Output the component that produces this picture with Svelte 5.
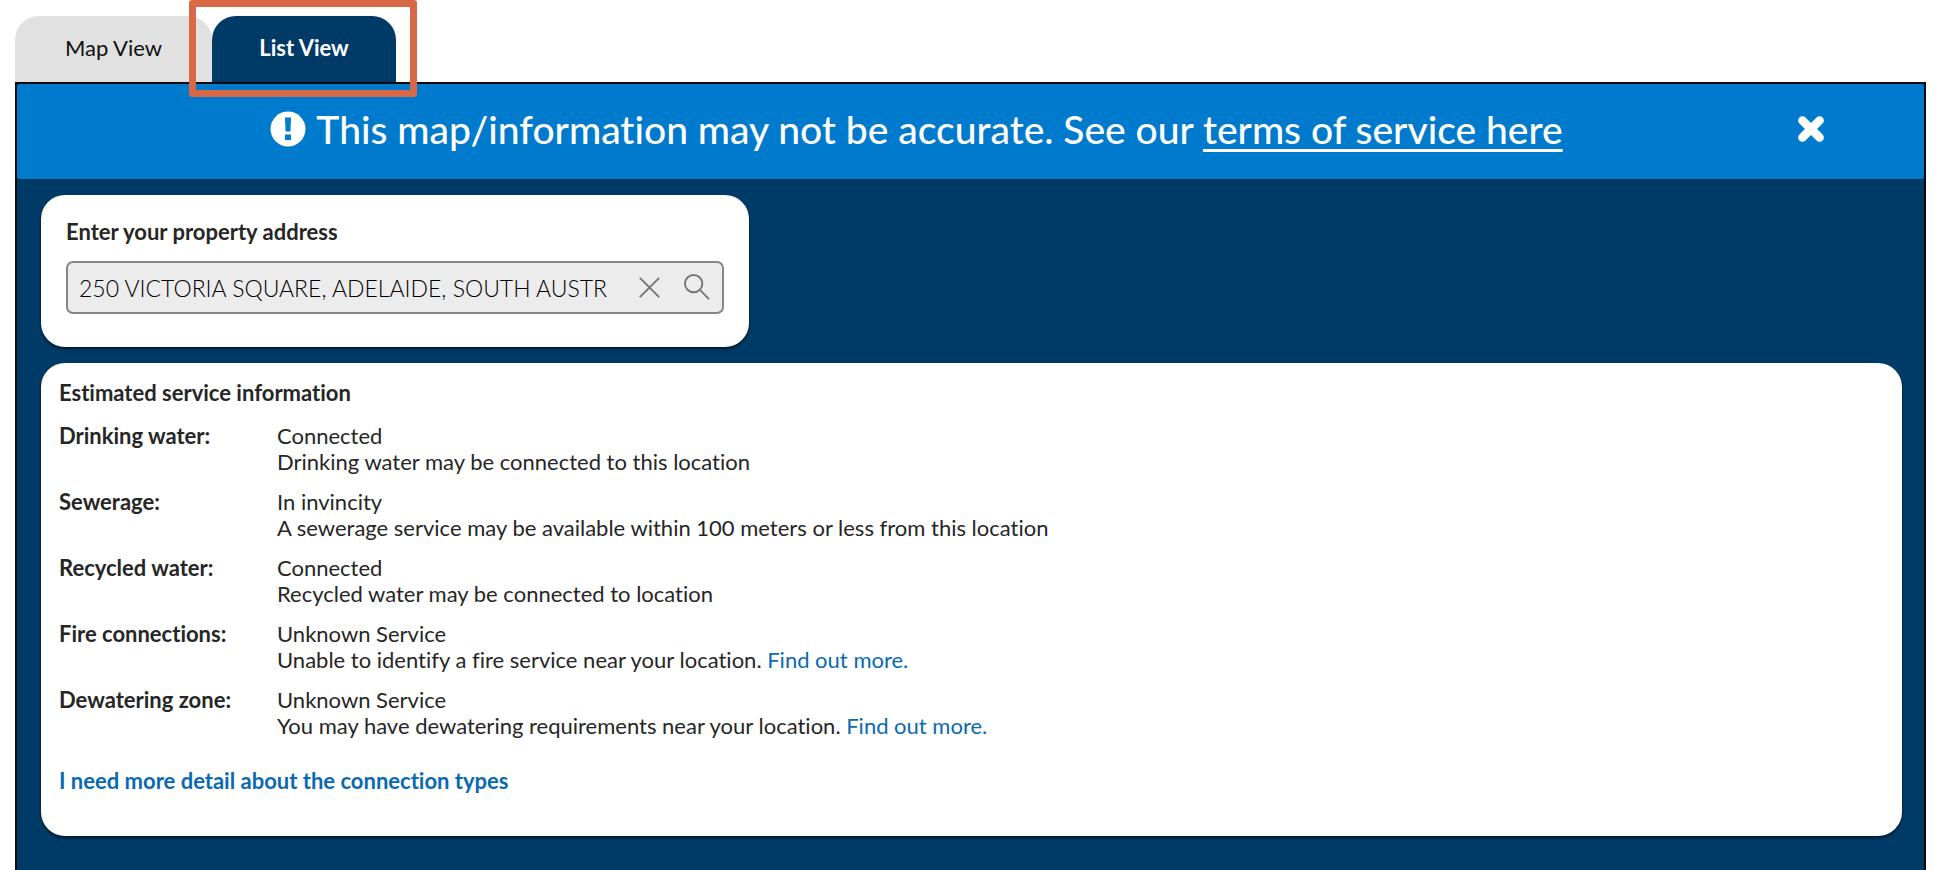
<script lang="ts">
	interface Service {
		name: string;
		status: string;
		detail: string;
		link?: boolean;
	}

	const services: Service[] = [
		{
			name: 'Drinking water:',
			status: 'Connected',
			detail: 'Drinking water may be connected to this location'
		},
		{
			name: 'Sewerage:',
			status: 'In invincity',
			detail: 'A sewerage service may be available within 100 meters or less from this location'
		},
		{
			name: 'Recycled water:',
			status: 'Connected',
			detail: 'Recycled water may be connected to location'
		},
		{
			name: 'Fire connections:',
			status: 'Unknown Service',
			detail: 'Unable to identify a fire service near your location.',
			link: true
		},
		{
			name: 'Dewatering zone:',
			status: 'Unknown Service',
			detail: 'You may have dewatering requirements near your location.',
			link: true
		}
	];

	let view = $state('list');
	let showNotice = $state(true);
	let address = $state('250 VICTORIA SQUARE, ADELAIDE, SOUTH AUSTR');
</script>

<main>
	<div class="tabs" role="tablist">
		<button role="tab" aria-selected={view === 'map'} onclick={() => (view = 'map')}>Map View</button>
		<button class="marked" role="tab" aria-selected={view === 'list'} onclick={() => (view = 'list')}>List View</button>
	</div>

	<div class="panel">
		{#if showNotice}
			<div class="notice">
				<p>
					<svg class="alert" viewBox="0 0 36 36" aria-hidden="true">
						<circle cx="18" cy="18" r="17.5" fill="#fff" />
						<path d="M15 6.500h6l-.5 14h-5zM15 23.500h6v5.500h-6z" fill="#007acc" />
					</svg>
					<span>This map/information may not be accurate. See our <a href="#terms">terms of service here</a></span>
				</p>
				<button aria-label="Close" onclick={() => (showNotice = false)}>
					<svg viewBox="0 0 28 28" aria-hidden="true">
						<path d="M6 6l16 16M22 6L6 22" stroke="#fff" stroke-width="8" stroke-linecap="round" />
					</svg>
				</button>
			</div>
		{/if}

		<div class="content">
			<form class="card search" onsubmit={(event) => event.preventDefault()}>
				<label for="address">Enter your property address</label>
				<div class="field">
					<input id="address" type="text" bind:value={address} />
					<button type="button" aria-label="Clear" onclick={() => (address = '')}>
						<svg viewBox="0 0 28 28" aria-hidden="true">
							<path d="M4 4l20 20M24 4L4 24" />
						</svg>
					</button>
					<button aria-label="Search">
						<svg viewBox="0 0 28 28" aria-hidden="true">
							<circle cx="10" cy="10" r="9" />
							<path d="M16.500 16.500L26 26" />
						</svg>
					</button>
				</div>
			</form>

			<section class="card info">
				<h2>Estimated service information</h2>
				<dl>
					{#each services as service (service.name)}
						<dt>{service.name}</dt>
						<dd>
							{service.status}<br />
							{service.detail}
							{#if service.link}<a href="#more">Find out more.</a>{/if}
						</dd>
					{/each}
				</dl>
				<a class="types" href="#types">I need more detail about the connection types</a>
			</section>
		</div>
	</div>
</main>

<style>
	:global(body) {
		margin: 0;
		background: #fff;
	}

	main {
		display: flex;
		flex-direction: column;
		box-sizing: border-box;
		min-height: 100vh;
		padding: 16px 28px 0 15px;
		font-family: Lato, 'Liberation Sans', sans-serif;
		font-size: 22px;
		font-variant-ligatures: none;
		line-height: 26px;
		color: #262626;
	}

	button {
		padding: 0;
		border: 0;
		background: none;
		font: inherit;
		cursor: pointer;
	}

	svg {
		display: block;
		fill: none;
	}

	.tabs {
		display: flex;
	}

	.tabs button {
		position: relative;
		width: 197px;
		height: 66px;
		padding-bottom: 2px;
		border-radius: 24px 24px 0 0;
		background: #e1e1e1;
		color: #111;
	}

	.tabs button.marked {
		width: 184px;
	}

	.tabs button[aria-selected='true'] {
		background: #003b67;
		color: #fff;
		font-weight: bold;
	}

	.marked::after {
		content: '';
		position: absolute;
		inset: -16px -21px -15px -23px;
		border: 7px solid #d96846;
		border-radius: 3px;
	}

	.panel {
		flex: 1;
		border: 2px solid #0a0a0f;
		border-bottom: 0;
		background: #003b67;
	}

	.notice {
		display: flex;
		align-items: center;
		box-sizing: border-box;
		height: 96px;
		padding: 0 98px 5px 20px;
		border-bottom: 1px solid #002f55;
		border-radius: 3px;
		background: #007acc;
		color: #fff;
		font-size: 39px;
		line-height: 44px;
	}

	.notice p {
		display: flex;
		flex: 1;
		align-items: center;
		justify-content: center;
		gap: 10px;
		margin: 0;
		font-weight: 500;
	}

	.notice a {
		color: inherit;
		text-decoration-thickness: 3px;
		text-underline-offset: 5px;
	}

	.alert {
		width: 36px;
		height: 36px;
	}

	.notice button svg {
		width: 30px;
		height: 30px;
	}

	.content {
		display: flex;
		flex-direction: column;
		gap: 16px;
		padding: 15px 22px 35px 24px;
	}

	.card {
		box-sizing: border-box;
		border-radius: 24px;
		background: #fff;
		box-shadow: 0 2px 3px rgba(0, 0, 0, 0.6);
	}

	.search {
		width: 708px;
		max-width: 100%;
		padding: 24px 25px 33px;
	}

	.search label {
		display: block;
		margin-bottom: 16px;
		font-weight: bold;
	}

	.field {
		display: flex;
		box-sizing: border-box;
		height: 53px;
		border: 2px solid #868686;
		border-radius: 7px;
		background: #ececec;
	}

	.field input {
		flex: 1;
		min-width: 0;
		padding: 0 0 0 11px;
		border: 0;
		outline: 0;
		background: none;
		color: #000;
		font: inherit;
		font-size: 23px;
		font-weight: 300;
	}

	.field button {
		display: grid;
		place-items: center;
		width: 48px;
		padding-right: 2px;
	}

	.field svg {
		width: 27px;
		height: 27px;
		stroke: #777;
		stroke-width: 2;
	}

	.info {
		padding: 17px 18px 42px;
	}

	h2 {
		margin: 0;
		font-size: 22px;
		line-height: 26px;
	}

	dl {
		display: grid;
		grid-template-columns: 218px 1fr;
		row-gap: 14px;
		margin: 17px 0 29px;
	}

	dt {
		font-weight: bold;
	}

	dd {
		margin: 0;
	}

	.info a {
		color: #0a69b2;
		text-decoration: none;
	}

	.info a.types {
		font-weight: bold;
	}
</style>
